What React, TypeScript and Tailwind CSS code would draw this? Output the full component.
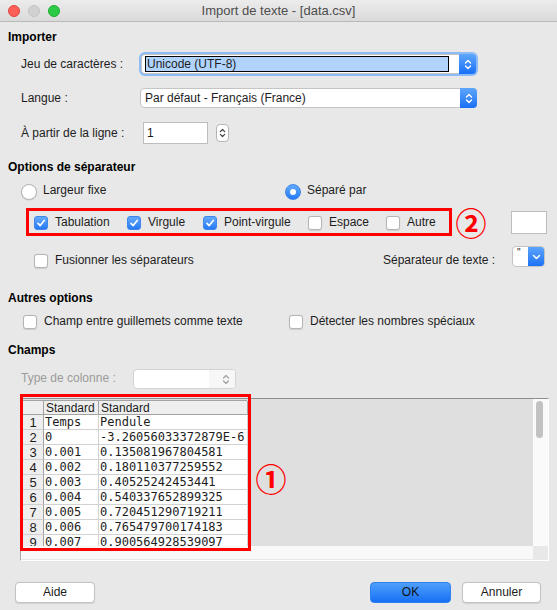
import React from 'react';

// Import de texte dialog (LibreOffice, macOS look)

const rows: [string, string][] = [
  ['Temps', 'Pendule'],
  ['0', '-3.26056033372879E-6'],
  ['0.001', '0.135081967804581'],
  ['0.002', '0.180110377259552'],
  ['0.003', '0.40525242453441'],
  ['0.004', '0.540337652899325'],
  ['0.005', '0.720451290719211'],
  ['0.006', '0.765479700174183'],
  ['0.007', '0.900564928539097'],
];

function UpDown({ color = 'white', w = 8, h = 13 }: { color?: string; w?: number; h?: number }) {
  return (
    <svg width={w} height={h} viewBox="0 0 8 13" fill="none" stroke={color} strokeWidth="1.4" strokeLinecap="round" strokeLinejoin="round">
      <path d="M1.5 5 L4 2.5 L6.5 5" />
      <path d="M1.5 8 L4 10.5 L6.5 8" />
    </svg>
  );
}

function Checkbox({ checked }: { checked?: boolean }) {
  if (checked) {
    return (
      <span className="flex h-[14px] w-[14px] shrink-0 items-center justify-center rounded-[3px] border border-[#3f86ea] bg-gradient-to-b from-[#63a9fb] to-[#2479f6]">
        <svg width="10" height="10" viewBox="0 0 10 10" fill="none" stroke="white" strokeWidth="1.7" strokeLinecap="round" strokeLinejoin="round">
          <path d="M2 5.3 L4.2 7.6 L8.2 2.4" />
        </svg>
      </span>
    );
  }
  return <span className="block h-[14px] w-[14px] shrink-0 rounded-[3px] border border-[#b5b5b5] bg-white shadow-[0_0.5px_1px_rgba(0,0,0,0.12)]" />;
}

function Radio({ checked }: { checked?: boolean }) {
  if (checked) {
    return (
      <span className="flex h-[16px] w-[16px] shrink-0 items-center justify-center rounded-full border border-[#3f86ea] bg-gradient-to-b from-[#63a9fb] to-[#2479f6]">
        <span className="h-[6px] w-[6px] rounded-full bg-white" />
      </span>
    );
  }
  return <span className="block h-[16px] w-[16px] shrink-0 rounded-full border border-[#b3b3b3] bg-white shadow-[0_0.5px_1px_rgba(0,0,0,0.12)]" />;
}

function Label({ children, className = '' }: { children: React.ReactNode; className?: string }) {
  return <span className={`block whitespace-nowrap leading-[15px] ${className}`}>{children}</span>;
}

function Circled({ children }: { children: React.ReactNode }) {
  return (
    <span className="flex h-[28px] w-[28px] items-center justify-center font-['Noto_Sans_CJK_JP',sans-serif] text-[31px] leading-[28px] font-bold text-[#ff0000]">
      {children}
    </span>
  );
}

function Select({ value, focused }: { value: string; focused?: boolean }) {
  return (
    <div
      className={`flex h-[20px] items-stretch rounded-[4px] border border-[#c4c4c4] bg-white ${
        focused ? 'ml-[1px] w-[335px] shadow-[0_0_0_2px_#8cbcf7]' : 'w-[337px]'
      }`}
    >
      <div className="flex flex-1 items-center pl-[3px]">
        {focused ? (
          <span className="flex h-[16px] w-[304px] items-center border border-black bg-[#b0d4fe] pl-[1px] leading-[15px]">{value}</span>
        ) : (
          <span className="pl-[1px] leading-[15px]">{value}</span>
        )}
      </div>
      <div className="-my-[1px] -mr-[1px] flex w-[17px] items-center justify-center rounded-r-[4px] bg-gradient-to-b from-[#5ea6fb] to-[#176ff5]">
        <UpDown />
      </div>
    </div>
  );
}

export default function App() {
  return (
    <div className="flex h-[610px] w-[557px] flex-col overflow-hidden bg-[#e8e8e8] font-['Liberation_Sans',Arial,sans-serif] text-[12px] text-[#1d1d1d]">
      {/* Title bar */}
      <div className="grid h-[22px] shrink-0 grid-cols-[70px_1fr_70px] items-center border-b border-[#b9b9b9] bg-gradient-to-b from-[#ececec] to-[#dadada]">
        <div className="flex gap-[8px] pl-[8px]">
          <span className="h-[12px] w-[12px] rounded-full border border-[#e2463f] bg-[#fc5f57]" />
          <span className="h-[12px] w-[12px] rounded-full border border-[#c4c4c4] bg-[#d1d1d1]" />
          <span className="h-[12px] w-[12px] rounded-full border border-[#1ead34] bg-[#2ccb45]" />
        </div>
        <div className="text-center text-[13px] leading-[15px] text-[#4d4d4d]">Import de texte - [data.csv]</div>
        <div />
      </div>

      {/* Importer */}
      <Label className="mt-[8px] h-[15px] pl-[8px] font-bold text-black">Importer</Label>

      <div className="mt-[7px] flex h-[24px] items-center pl-[21px]">
        <Label className="w-[119px]">Jeu de caractères :</Label>
        <Select value="Unicode (UTF-8)" focused />
      </div>

      <div className="mt-[12px] flex h-[20px] items-center pl-[21px]">
        <Label className="w-[119px]">Langue :</Label>
        <Select value="Par défaut - Français (France)" />
      </div>

      <div className="mt-[14px] flex h-[22px] items-center pl-[21px]">
        <Label className="w-[122px]">À partir de la ligne :</Label>
        <div className="flex h-[22px] w-[65px] items-center border border-[#bdbdbd] bg-white pl-[3px] leading-[15px]">1</div>
        <div className="ml-[8px] flex h-[18px] w-[13px] items-center justify-center rounded-[4px] border border-[#b5b5b5] bg-white">
          <UpDown color="#444" w={7} h={12} />
        </div>
      </div>

      {/* Options de séparateur */}
      <Label className="mt-[16px] h-[15px] pl-[8px] font-bold text-black">Options de séparateur</Label>

      <div className="mt-[7px] flex h-[18px] items-start pl-[21px]">
        <div className="flex w-[264px] items-start gap-[6px]">
          <span className="mt-[2px] block">
            <Radio />
          </span>
          <Label className="mt-[1px]">Largeur fixe</Label>
        </div>
        <div className="flex items-start gap-[6px]">
          <span className="mt-[2px] block">
            <Radio checked />
          </span>
          <Label className="mt-[1px]">Séparé par</Label>
        </div>
      </div>

      <div className="mt-[8px] flex h-[28px] items-center pl-[26px]">
        <div className="flex h-[28px] w-[426px] items-start border-[3px] border-[#ff0000] pl-[5px]">
          {[
            ['Tabulation', true, 'w-[93px]'],
            ['Virgule', true, 'w-[76px]'],
            ['Point-virgule', true, 'w-[105px]'],
            ['Espace', false, 'w-[78px]'],
            ['Autre', false, ''],
          ].map(([label, checked, w]) => (
            <div key={label as string} className={`flex items-start gap-[7px] ${w}`}>
              <span className="mt-[5px] block">
                <Checkbox checked={checked as boolean} />
              </span>
              <Label className="mt-[4px]">{label as string}</Label>
            </div>
          ))}
        </div>
        <span className="ml-[5px]">
          <Circled>②</Circled>
        </span>
        <div className="ml-[26px] h-[23px] w-[36px] border border-[#bdbdbd] bg-white" />
      </div>

      <div className="mt-[10px] flex h-[22px] items-start pl-[34px]">
        <div className="flex w-[349px] items-start gap-[7px]">
          <span className="mt-[8px] block">
            <Checkbox />
          </span>
          <Label className="mt-[7px]">Fusionner les séparateurs</Label>
        </div>
        <div className="flex w-[162px] items-start justify-between">
          <Label className="mt-[7px]">Séparateur de texte :</Label>
          <div className="flex h-[21px] w-[33px] overflow-hidden rounded-[4px] border border-[#c4c4c4] bg-white">
            <span className="w-[15px] pl-[4px] text-[10px] leading-[12px]">"</span>
            <span className="-my-[1px] -mr-[1px] flex flex-1 items-center justify-center bg-gradient-to-b from-[#5ea6fb] to-[#176ff5]">
              <svg width="9" height="6" viewBox="0 0 9 6" fill="none" stroke="white" strokeWidth="1.5" strokeLinecap="round" strokeLinejoin="round">
                <path d="M1.5 1.5 L4.5 4.5 L7.5 1.5" />
              </svg>
            </span>
          </div>
        </div>
      </div>

      {/* Autres options */}
      <Label className="mt-[23px] h-[15px] pl-[8px] font-bold text-black">Autres options</Label>

      <div className="mt-[7px] flex h-[16px] items-start pl-[23px]">
        <div className="flex w-[266px] items-start gap-[7px]">
          <span className="mt-[2px] block">
            <Checkbox />
          </span>
          <Label className="mt-[1px]">Champ entre guillemets comme texte</Label>
        </div>
        <div className="flex items-start gap-[7px]">
          <span className="mt-[2px] block">
            <Checkbox />
          </span>
          <Label className="mt-[1px]">Détecter les nombres spéciaux</Label>
        </div>
      </div>

      {/* Champs */}
      <Label className="mt-[14px] h-[15px] pl-[8px] font-bold text-black">Champs</Label>

      <div className="mt-[11px] flex h-[20px] items-start pl-[21px]">
        <Label className="mt-[2px] w-[112px] text-[#9b9b9b]">Type de colonne :</Label>
        <div className="flex h-[20px] w-[103px] overflow-hidden rounded-[4px] border border-[#d3d3d3] bg-white">
          <span className="w-[75px]" />
          <span className="flex flex-1 items-center justify-end bg-[#f7f7f7] pr-[5px]">
            <UpDown color="#a5a5a5" />
          </span>
        </div>
      </div>

      {/* Preview grid */}
      <div className="relative mt-[9px] ml-[20px] flex h-[163px] w-[529px] flex-col border-t border-r border-b border-l border-t-[#8e8e8e] border-l-[#a8a8a8] border-r-white border-b-white">
        <div className="flex h-[147px]">
          <div className="flex-1 overflow-hidden bg-[#dfdfdf] pl-[1px] pt-[1px]">
            <div className="grid w-[225px] grid-cols-[21px_55px_149px] border-t border-l border-[#a3a3a3]">
              <div className="h-[14px] border-r border-b border-[#a3a3a3] bg-[#eeeeee]" />
              <div className="flex h-[14px] items-center border-r border-b border-[#a3a3a3] bg-[#eeeeee] pl-[2px] text-[12px] leading-[14px]">Standard</div>
              <div className="flex h-[14px] items-center border-r border-b border-[#a3a3a3] bg-[#eeeeee] pl-[2px] text-[12px] leading-[14px]">Standard</div>
              {rows.map(([a, b], i) => (
                <React.Fragment key={i}>
                  <div className="flex h-[15px] items-center justify-center border-r border-b border-r-[#a3a3a3] border-b-[#cfcfcf] bg-[#eeeeee] text-[13px] leading-[15px]">
                    {i + 1}
                  </div>
                  <div className="flex h-[15px] items-center border-r border-b border-[#d2d2d2] bg-white pl-[1px] font-['DejaVu_Sans_Mono',monospace] text-[12px] leading-[15px]">
                    {a}
                  </div>
                  <div className="flex h-[15px] items-center border-r border-b border-[#d2d2d2] bg-white pl-[1px] font-['DejaVu_Sans_Mono',monospace] text-[12px] leading-[15px]">
                    {b}
                  </div>
                </React.Fragment>
              ))}
            </div>
          </div>
          <div className="w-[15px] bg-[#fafafa] pl-[3px] pt-[2px]">
            <div className="h-[37px] w-[7px] rounded-full bg-[#c2c2c2]" />
          </div>
        </div>
        <div className="flex h-[13px]">
          <div className="flex-1 bg-[#f8f8f8]" />
          <div className="w-[15px] bg-[#e8e8e8]" />
        </div>

        {/* annotation 1 */}
        <div className="absolute left-[-1px] top-[-5px] h-[157px] w-[231px] border-[3px] border-[#ff0000]" />
        <span className="absolute left-[236px] top-[65px]">
          <Circled>①</Circled>
        </span>
      </div>

      {/* Buttons */}
      <div className="mt-[21px] flex h-[21px] pl-[15px] pr-[16px]">
        <button className="h-[21px] w-[80px] rounded-[4px] border border-[#c3c3c3] bg-white leading-[15px] shadow-[0_0.5px_1px_rgba(0,0,0,0.1)]">Aide</button>
        <button className="ml-auto h-[21px] w-[81px] rounded-[4px] border border-[#2f7fee] bg-gradient-to-b from-[#4e9ffa] to-[#146ff5] leading-[15px] text-[#111]">OK</button>
        <button className="ml-[11px] h-[21px] w-[79px] rounded-[4px] border border-[#c3c3c3] bg-white leading-[15px] shadow-[0_0.5px_1px_rgba(0,0,0,0.1)]">Annuler</button>
      </div>
    </div>
  );
}
